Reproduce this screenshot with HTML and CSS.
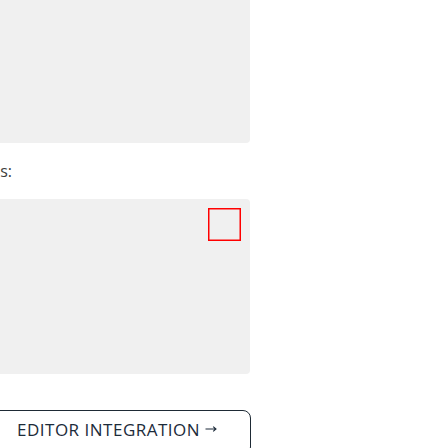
FILE: index.html
```html
<!DOCTYPE html>
<html>
<head>
<meta charset="utf-8">
<link rel="stylesheet" href="styles.css">
</head>
<body>
<div class="wrap">
  <div class="panel panel-top"></div>
  <p class="label">Options:</p>
  <div class="panel panel-main">
    <span class="marker"></span>
  </div>
  <div class="actions">
    <a class="btn">EDITOR INTEGRATION <svg class="arrow" width="12" height="8" viewBox="0 0 12 8" aria-label="→"><path d="M0.5 4H11M8.2 1.6L11 4L8.2 6.4" fill="none" stroke="currentColor" stroke-width="1.1"/></svg></a>
  </div>
</div>
</body>
</html>
```
FILE: styles.css
```css
html, body {
  margin: 0;
  padding: 0;
  background: #ffffff;
  overflow: hidden;
}
.wrap {
  width: 450px;
  margin-left: -200px;
  font-family: "Open Sans", "Noto Sans", sans-serif;
}
.panel {
  background: #f0f0f0;
  border-radius: 0 0 4px 0;
}
.panel-top {
  height: 143px;
}
.label {
  margin: 16px 0;
  font-size: 16px;
  line-height: 24px;
  color: #3c3c3c;
  text-align: right;
  padding-right: 238px;
  white-space: nowrap;
}
.panel-main {
  position: relative;
  height: 175px;
  border-radius: 4px;
}
.marker {
  position: absolute;
  top: 9px;
  right: 9px;
  width: 31px;
  height: 31px;
  border: 1px solid #ff0000;
  box-shadow: inset 0 0 0 0.5px #ff0000;
}
.actions {
  margin-top: 36px;
  padding-left: 180px;
}
.btn {
  display: inline-block;
  padding: 7px 33px 12px 36px;
  border: 1px solid #1e2a35;
  border-radius: 8px;
  font-size: 17px;
  letter-spacing: 0.5px;
  line-height: 24px;
  color: #1c2b3a;
  white-space: nowrap;
}
.arrow {
  vertical-align: 3px;
}
```
